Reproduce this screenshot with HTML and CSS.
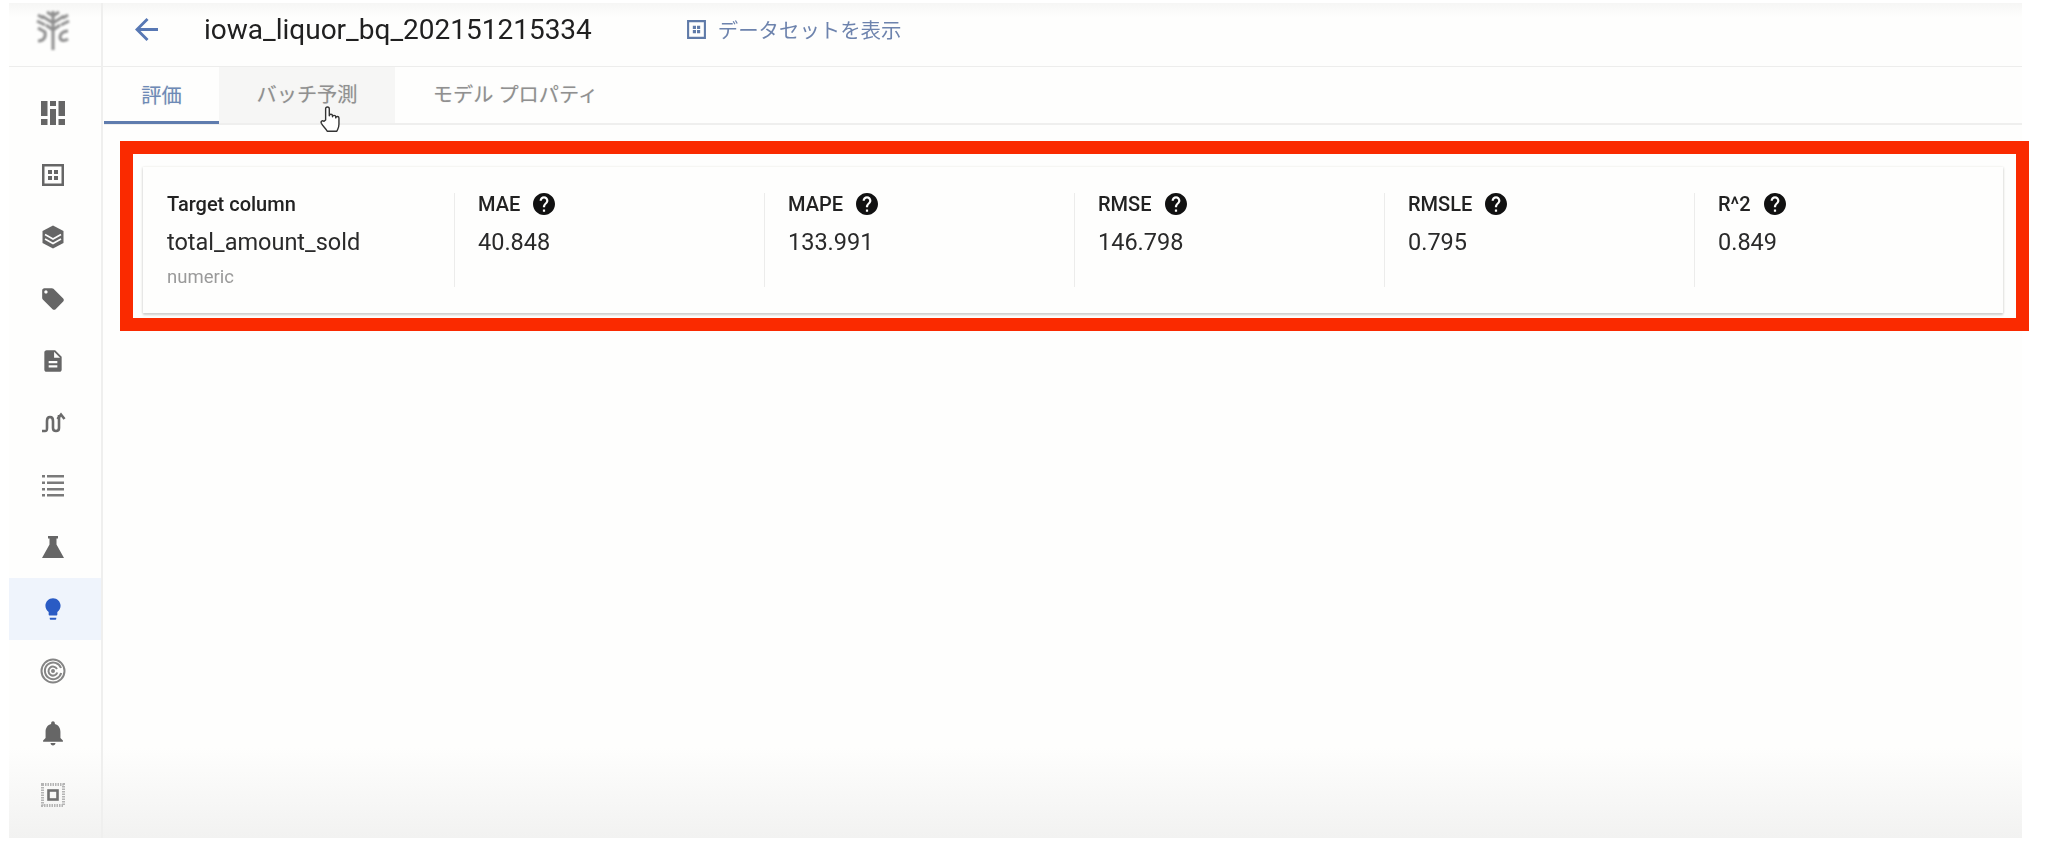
FILE: index.html
```html
<!DOCTYPE html>
<html lang="ja">
<head>
<meta charset="utf-8">
<title>iowa_liquor_bq_202151215334</title>
<link rel="stylesheet" href="styles.css">
</head>
<body>
<div class="app">
  <aside class="sidebar">
    <div class="logo">
      <svg class="logo-icon" viewBox="0 0 36 44" fill="none" stroke="#8f8f8f" stroke-width="3">
        <path d="M18 3v39M18 8l-6-4M18 8l6-4M18 15l-11-7M18 15l11-7M18 22l-7-5M18 22l7-5M3 7l5 3M33 7l-5 3M2 13l8 4M34 13l-8 4M3 20l7 4c1 5-1 9-7 9M33 23c-5 0-8 3-8 6s3 5 8 2"/>
      </svg>
    </div>
    <nav class="nav">
      <div class="nav-item"><svg class="icon" viewBox="0 0 26 26"><path class="fill" d="M1 1h6.500v15H1zM1 19h6.500v6H1zM10 1h6v5h-6zM10 9h6v16h-6zM18.500 1H25v15h-6.500zM18.500 19H25v6h-6.500z"/></svg></div>
      <div class="nav-item"><svg class="icon" viewBox="0 0 26 26"><path class="fill" fill-rule="evenodd" d="M2 2h22v22H2zM4.500 4.500v17h17v-17z"/><path class="fill" d="M8 8h4v4H8zM14 8h4v4h-4zM8 14h4v4H8zM14 14h4v4h-4z"/></svg></div>
      <div class="nav-item"><svg class="icon" viewBox="0 0 26 26"><path class="fill" d="M13 1.500 23.500 7v12L13 24.500 2.500 19V7z"/><path d="M5 10.500l8 4.500 8-4.500M5 15l8 4.500 8-4.500" fill="none" stroke="#fdfdfc" stroke-width="1.600"/></svg></div>
      <div class="nav-item"><svg class="icon" viewBox="0 0 24 24"><path class="fill" d="M21.410 11.580l-9-9C12.050 2.220 11.550 2 11 2H4c-1.100 0-2 .9-2 2v7c0 .55.22 1.050.59 1.420l9 9c.36.36.86.58 1.410.58.55 0 1.050-.22 1.410-.59l7-7c.37-.36.59-.86.59-1.410 0-.55-.23-1.060-.59-1.420zM5.500 7C4.670 7 4 6.330 4 5.500S4.670 4 5.500 4 7 4.670 7 5.500 6.330 7 5.500 7z"/></svg></div>
      <div class="nav-item"><svg class="icon" viewBox="0 0 24 24"><path class="fill" d="M14 2H6c-1.100 0-1.990.9-1.990 2L4 20c0 1.100.89 2 1.990 2H18c1.100 0 2-.9 2-2V8l-6-6zm2 16H8v-2h8v2zm0-4H8v-2h8v2zm-3-5V3.500L18.500 9H13z"/></svg></div>
      <div class="nav-item"><svg class="icon" viewBox="0 0 26 26" fill="none" stroke="#6a6a6a" stroke-width="2.600"><path d="M2 21h3c2 0 2-1 2-3v-7c0-3 1-4 3-4s3 1 3 4v7c0 2 1 3 3 3s3-1 3-3V5"/><path d="M17.500 9l3.500-4.500L24.500 9"/></svg></div>
      <div class="nav-item"><svg class="icon" viewBox="0 0 26 26"><path class="fill-soft" d="M2 3h3v2.400H2zM7 3h17v2.400H7zM2 9.500h3v2.400H2zM7 9.500h17v2.400H7zM2 16h3v2.400H2zM7 16h17v2.400H7zM2 22h3v2.400H2zM7 22h17v2.400H7z"/></svg></div>
      <div class="nav-item"><svg class="icon" viewBox="0 0 26 26"><path class="fill" d="M8 2h10v2.500h-1.500v6L24 24H2l7.500-13.500v-6H8z"/></svg></div>
      <div class="nav-item nav-item-active"><svg class="icon" viewBox="0 0 24 24"><path class="fill-blue" d="M9 21c0 .55.45 1 1 1h4c.55 0 1-.45 1-1v-1H9v1zm3-19C8.140 2 5 5.140 5 9c0 2.380 1.190 4.470 3 5.740V17c0 .55.45 1 1 1h6c.55 0 1-.45 1-1v-2.260c1.810-1.270 3-3.360 3-5.740 0-3.860-3.140-7-7-7z"/></svg></div>
      <div class="nav-item"><svg class="icon icon-soft" viewBox="0 0 26 26" fill="none" stroke="#858585" stroke-width="2"><circle cx="13" cy="13" r="11.500"/><path d="M21 10a8.300 8.300 0 1 0 .2 5"/><path d="M17 11a4.500 4.500 0 1 0 .3 3.500"/><circle cx="13" cy="13" r="1" fill="#858585"/></svg></div>
      <div class="nav-item"><svg class="icon" viewBox="1.500 1.500 21 21"><path class="fill" d="M12 22c1.100 0 2-.9 2-2h-4c0 1.100.89 2 2 2zm6-6v-5c0-3.070-1.640-5.640-4.500-6.320V4c0-.83-.67-1.500-1.500-1.500s-1.500.67-1.500 1.500v.68C7.630 5.360 6 7.920 6 11v5l-2 2v1h16v-1l-2-2z"/></svg></div>
      <div class="nav-item"><svg class="icon icon-soft" viewBox="0 0 26 26" fill="none"><rect x="2.500" y="2.500" width="21" height="21" stroke="#b4b4b4" stroke-width="3" stroke-dasharray="1.500 1"/><rect x="8.500" y="8.500" width="9" height="9" stroke="#707070" stroke-width="2.600"/></svg></div>
    </nav>
  </aside>
  <main class="main">
    <header class="header">
      <svg class="back" viewBox="4 4 16 16"><path d="M20 11H7.830l5.590-5.590L12 4l-8 8 8 8 1.410-1.410L7.830 13H20v-2z"/></svg>
      <h1 class="title">iowa_liquor_bq_202151215334</h1>
      <a class="dataset-link">
        <svg class="dataset-icon" viewBox="0 0 20 20"><path fill-rule="evenodd" d="M1 1h18v18H1zM3 3v14h14V3z"/><path d="M6.500 6.500h3v3h-3zM10.500 6.500h3v3h-3zM6.500 10.500h3v3h-3zM10.500 10.500h3v3h-3z"/></svg>
        <span>データセットを表示</span>
      </a>
    </header>
    <div class="tabs">
      <div class="tab tab-active">評価</div>
      <div class="tab tab-hover">バッチ予測</div>
      <div class="tab tab-plain">モデル プロパティ</div>
      <svg class="cursor" viewBox="0 0 22 27">
        <path d="M6 14V3.500a1.700 1.700 0 0 1 3.400 0V10c0-1.800 3-1.800 3 0v1c0-1.800 3-1.800 3 0v1c0-1.700 3-1.700 3 0v6c0 3-1 4-2 6.500H7.500C6.500 22 3.500 20 2 17c-.8-1.700 1-3 2.300-1.800z" fill="#fff" stroke="#333" stroke-width="1.300" stroke-linejoin="round"/>
      </svg>
    </div>
    <section class="highlight">
      <div class="card">
        <div class="metric metric-first">
          <div class="metric-label">Target column</div>
          <div class="metric-value">total_amount_sold</div>
          <div class="metric-note">numeric</div>
        </div>
        <div class="metric">
          <div class="metric-label">MAE <svg class="help" viewBox="2 2 20 20"><path d="M12 2C6.480 2 2 6.480 2 12s4.480 10 10 10 10-4.480 10-10S17.520 2 12 2zm1 17h-2v-2h2v2zm2.070-7.750l-.9.92C13.450 12.900 13 13.500 13 15h-2v-.5c0-1.100.45-2.100 1.170-2.830l1.240-1.260c.37-.36.59-.86.59-1.410 0-1.100-.9-2-2-2s-2 .9-2 2H8c0-2.210 1.790-4 4-4s4 1.790 4 4c0 .88-.36 1.680-.93 2.250z"/></svg></div>
          <div class="metric-value">40.848</div>
        </div>
        <div class="metric">
          <div class="metric-label">MAPE <svg class="help" viewBox="2 2 20 20"><path d="M12 2C6.480 2 2 6.480 2 12s4.480 10 10 10 10-4.480 10-10S17.520 2 12 2zm1 17h-2v-2h2v2zm2.070-7.750l-.9.92C13.450 12.900 13 13.500 13 15h-2v-.5c0-1.100.45-2.100 1.170-2.830l1.240-1.260c.37-.36.59-.86.59-1.410 0-1.100-.9-2-2-2s-2 .9-2 2H8c0-2.210 1.790-4 4-4s4 1.790 4 4c0 .88-.36 1.680-.93 2.250z"/></svg></div>
          <div class="metric-value">133.991</div>
        </div>
        <div class="metric">
          <div class="metric-label">RMSE <svg class="help" viewBox="2 2 20 20"><path d="M12 2C6.480 2 2 6.480 2 12s4.480 10 10 10 10-4.480 10-10S17.520 2 12 2zm1 17h-2v-2h2v2zm2.070-7.750l-.9.92C13.450 12.900 13 13.500 13 15h-2v-.5c0-1.100.45-2.100 1.170-2.830l1.240-1.260c.37-.36.59-.86.59-1.410 0-1.100-.9-2-2-2s-2 .9-2 2H8c0-2.210 1.790-4 4-4s4 1.790 4 4c0 .88-.36 1.680-.93 2.250z"/></svg></div>
          <div class="metric-value">146.798</div>
        </div>
        <div class="metric">
          <div class="metric-label">RMSLE <svg class="help" viewBox="2 2 20 20"><path d="M12 2C6.480 2 2 6.480 2 12s4.480 10 10 10 10-4.480 10-10S17.520 2 12 2zm1 17h-2v-2h2v2zm2.070-7.750l-.9.92C13.450 12.900 13 13.500 13 15h-2v-.5c0-1.100.45-2.100 1.170-2.830l1.240-1.260c.37-.36.59-.86.59-1.410 0-1.100-.9-2-2-2s-2 .9-2 2H8c0-2.210 1.790-4 4-4s4 1.790 4 4c0 .88-.36 1.680-.93 2.250z"/></svg></div>
          <div class="metric-value">0.795</div>
        </div>
        <div class="metric metric-last">
          <div class="metric-label">R^2 <svg class="help" viewBox="2 2 20 20"><path d="M12 2C6.480 2 2 6.480 2 12s4.480 10 10 10 10-4.480 10-10S17.520 2 12 2zm1 17h-2v-2h2v2zm2.070-7.750l-.9.92C13.450 12.900 13 13.500 13 15h-2v-.5c0-1.100.45-2.100 1.170-2.830l1.240-1.260c.37-.36.59-.86.59-1.410 0-1.100-.9-2-2-2s-2 .9-2 2H8c0-2.210 1.790-4 4-4s4 1.790 4 4c0 .88-.36 1.680-.93 2.250z"/></svg></div>
          <div class="metric-value">0.849</div>
        </div>
      </div>
    </section>
  </main>
</div>
</body>
</html>
```

FILE: styles.css
```css
* { box-sizing: border-box; }
html, body { height: 100%; }
body {
  margin: 0;
  padding: 3px 30px 22px 9px;
  background: #fff;
  font-family: Roboto, "Noto Sans CJK JP", sans-serif;
  overflow: hidden;
}
.app {
  display: flex;
  height: 835px;
  background: linear-gradient(#f6f6f5 0, #fefefd 14px, #fefefd 745px, #f2f2f1 835px);
}
.sidebar {
  flex: 0 0 94px;
  padding-right: 4px;
  border-right: 2px solid #efefee;
}
.logo {
  height: 64px;
  margin-right: -4px;
  padding: 0 4px 10px 0;
  display: flex;
  align-items: center;
  justify-content: center;
  border-bottom: 1px solid #ededec;
}
.logo-icon { width: 36px; height: 44px; filter: blur(.9px); }
.nav { padding-top: 15px; }
.nav-item {
  height: 62px;
  display: flex;
  align-items: center;
  justify-content: center;
}
.nav-item-active { margin-right: -4px; padding-right: 4px; background: #eff4fc; }
.icon { width: 26px; height: 26px; filter: blur(.7px); }
.icon-soft { filter: blur(.6px); }
.fill { fill: #666; }
.fill-soft { fill: #7a7a7a; }
.fill-blue { fill: #2a5bc4; }
.main { flex: 1; min-width: 0; }
.header {
  height: 64px;
  display: flex;
  align-items: center;
  padding: 0 0 11px 32px;
  border-bottom: 1px solid #ededec;
}
.back { width: 23px; height: 23px; fill: #5878b4; filter: blur(.6px); }
.title {
  margin: 0 0 0 46px;
  font-size: 28px;
  font-weight: 400;
  color: #202020;
  filter: blur(.6px);
}
.dataset-link {
  display: flex;
  align-items: center;
  margin-left: 94px;
  color: #6d83ad;
  font-size: 20.400px;
  filter: blur(.6px);
}
.dataset-icon { width: 21px; height: 21px; fill: #5f7aa8; margin-right: 11px; }
.tabs {
  position: relative;
  display: flex;
  height: 58px;
  margin-left: 1px;
  border-bottom: 2px solid #efefee;
}
.tab {
  display: flex;
  align-items: center;
  justify-content: center;
  padding-bottom: 3px;
  font-size: 20.200px;
  color: #909090;
  text-shadow: 0 0 1px rgba(144,144,144,.4);
}
.tab-active {
  width: 115px;
  color: #6d8ab8;
  box-shadow: inset 0 -3px 0 #5f7cae;
  margin-bottom: -1px;
}
.tab-hover { width: 176px; background: #f6f6f5; }
.tab-plain { width: 241px; }
.cursor {
  position: absolute;
  left: 215px;
  top: 38px;
  width: 24px;
  height: 29px;
  filter: blur(.5px);
}
.highlight {
  margin: 16px -7px 0 17px;
  padding: 13px 13px 5px 10px;
  border: 13px solid #fa2a00;
  background: #fefefd;
}
.card {
  display: grid;
  grid-template-columns: 312px repeat(4, 310px) 1fr;
  height: 146px;
  padding-top: 26px;
  background: #fefefd;
  box-shadow: 0 2px 2px #cfcfce, 1px 0 2px #eeeeed, -1px 0 2px #eeeeed;
}
.metric {
  height: 94px;
  padding-left: 23px;
  border-right: 1px solid #ececeb;
}
.metric-first { padding-left: 24px; }
.metric-last { border-right: 0; }
.metric-label {
  display: flex;
  align-items: center;
  gap: 13px;
  height: 22px;
  font-size: 20px;
  font-weight: 500;
  color: #222;
  filter: blur(.5px);
}
.metric-value {
  margin-top: 15px;
  height: 24px;
  line-height: 24px;
  font-size: 23.500px;
  color: #2a2a2a;
  filter: blur(.5px);
}
.metric-note {
  margin-top: 13px;
  font-size: 18.500px;
  line-height: 20px;
  color: #9a9a9a;
  filter: blur(.5px);
}
.help { width: 22px; height: 22px; fill: #111; }
```
